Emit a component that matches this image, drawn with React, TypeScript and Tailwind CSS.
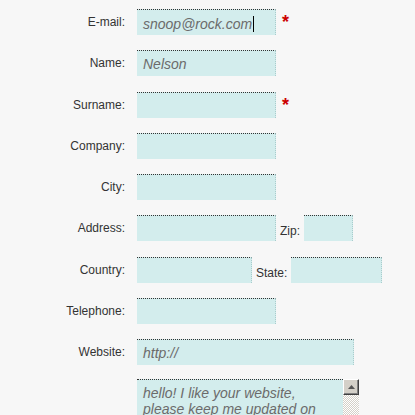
import React from 'react';

type Row = {
  label: string;
  value?: string;
  width: number;
  required?: boolean;
  caret?: boolean;
  extra?: { label: string; width: number };
};

const rows: Row[] = [
  { label: 'E-mail:', value: 'snoop@rock.com', width: 139, required: true, caret: true },
  { label: 'Name:', value: 'Nelson', width: 139 },
  { label: 'Surname:', width: 139, required: true },
  { label: 'Company:', width: 139 },
  { label: 'City:', width: 139 },
  { label: 'Address:', width: 139, extra: { label: 'Zip:', width: 49 } },
  { label: 'Country:', width: 115, extra: { label: 'State:', width: 91 } },
  { label: 'Telephone:', width: 139 },
  { label: 'Website:', value: 'http://', width: 217 },
];

function Field({ width, value, caret }: { width: number; value?: string; caret?: boolean }) {
  return (
    <div
      className="h-[26px] shrink-0 border-t border-dotted border-t-[#333] border-r border-r-[#a9cccc] bg-[#d3eded] pl-[6px] pt-[3px] text-[14px] leading-[20px] italic text-[#6b6b6b] whitespace-nowrap"
      style={{ width }}
    >
      {value}
      {caret ? <span className="ml-[1px] inline-block h-[16px] w-px translate-y-[3px] bg-black" /> : null}
    </div>
  );
}

function ScrollBar() {
  return (
    <div className="flex w-[16px] shrink-0 flex-col">
      <div className="flex h-[16px] items-center justify-center border-t border-l border-t-white border-l-white border-r border-b border-r-[#404040] border-b-[#404040] bg-[#d4d0c8] shadow-[inset_-1px_-1px_0_#808080]">
        <svg width="7" height="4" viewBox="0 0 7 4">
          <path d="M3.5 0 L7 4 L0 4 Z" fill="#555" />
        </svg>
      </div>
      <div className="flex-1 bg-[repeating-conic-gradient(#d4d0c8_0_25%,#ffffff_0_50%)] bg-[length:2px_2px]" />
    </div>
  );
}

export default function App() {
  return (
    <div className="min-h-screen bg-[#f7f7f7] pt-[9px] font-['Liberation_Sans',Arial,sans-serif]">
      <div className="flex flex-col gap-[15.25px]">
        {rows.map((r) => (
          <div key={r.label} className="flex h-[26px]">
            <div className="w-[125px] shrink-0 self-center text-right text-[12px] text-[#333]">{r.label}</div>
            <div className="ml-[12px] flex">
              <Field width={r.width} value={r.value} caret={r.caret} />
              {r.required ? (
                <span className="ml-[6px] mt-[4px] self-start text-[18px] font-bold leading-none text-[#cc0000]">*</span>
              ) : null}
              {r.extra ? (
                <>
                  <span className="ml-[4px] self-end pb-[1px] text-[12px] text-[#333]">{r.extra.label}</span>
                  <div className="ml-[4px]">
                    <Field width={r.extra.width} />
                  </div>
                </>
              ) : null}
            </div>
          </div>
        ))}

        <div className="-mt-[1px] flex">
          <div className="w-[125px] shrink-0" />
          <div className="ml-[12px] flex h-[80px] w-[222px]">
            <div className="flex-1 border-t border-dotted border-t-[#333] bg-[#d3eded] pl-[6px] pr-[4px] pt-[5px] text-[14px] leading-[16px] italic text-[#6b6b6b]">
              hello! I like your website, please keep me updated on your news. Thanks!
            </div>
            <ScrollBar />
          </div>
        </div>
      </div>
    </div>
  );
}
